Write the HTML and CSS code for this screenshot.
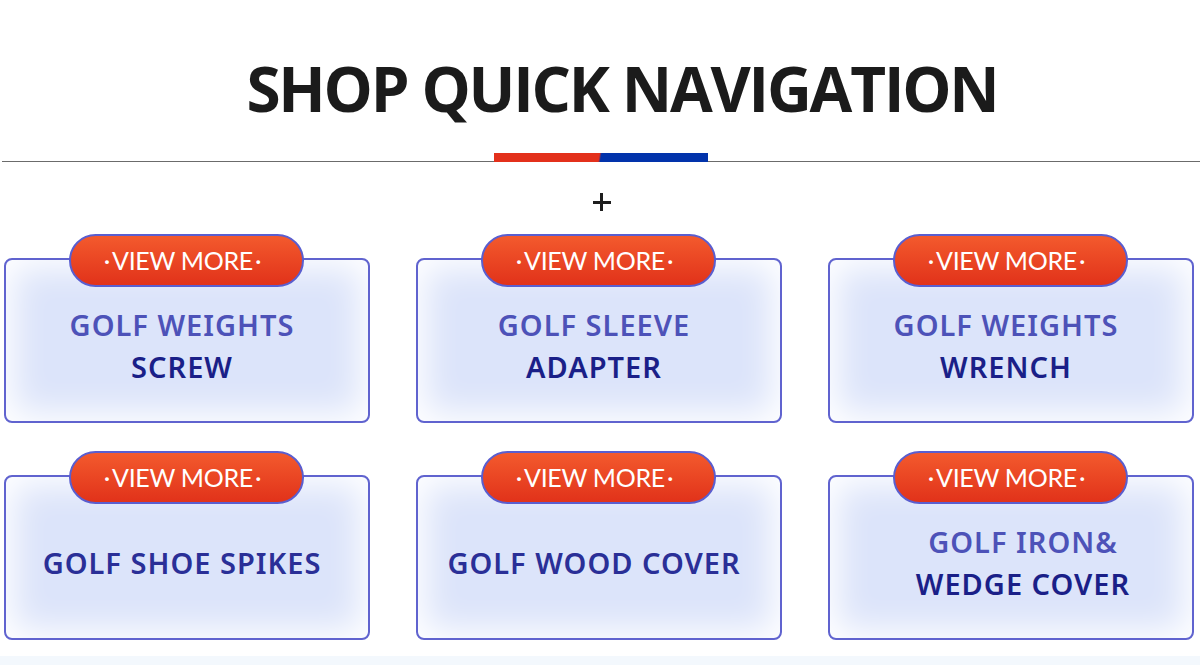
FILE: index.html
```html
<!DOCTYPE html>
<html lang="en">
<head>
    <meta charset="UTF-8">
    <meta name="viewport" content="width=device-width, initial-scale=1.0">
    <title>Shop Quick Navigation</title>
    <link rel="stylesheet" href="styles.css">
</head>
<body>
    <section class="quick-nav">
        <h1 class="quick-nav-title">SHOP QUICK NAVIGATION</h1>
        <div class="divider"><span class="divider-bar"></span></div>
        <div class="plus"><span class="plus-icon"></span></div>

        <div class="nav-grid">
            <a href="#" class="nav-item">
                <span class="view-more"><i>&middot;</i>VIEW MORE<i>&middot;</i></span>
                <div class="nav-card">
                    <span class="line-light">GOLF WEIGHTS</span>
                    <span class="line-dark">SCREW</span>
                </div>
            </a>
            <a href="#" class="nav-item">
                <span class="view-more"><i>&middot;</i>VIEW MORE<i>&middot;</i></span>
                <div class="nav-card">
                    <span class="line-light">GOLF SLEEVE</span>
                    <span class="line-dark">ADAPTER</span>
                </div>
            </a>
            <a href="#" class="nav-item">
                <span class="view-more"><i>&middot;</i>VIEW MORE<i>&middot;</i></span>
                <div class="nav-card">
                    <span class="line-light">GOLF WEIGHTS</span>
                    <span class="line-dark">WRENCH</span>
                </div>
            </a>
            <a href="#" class="nav-item">
                <span class="view-more"><i>&middot;</i>VIEW MORE<i>&middot;</i></span>
                <div class="nav-card">
                    <span class="line-single">GOLF SHOE SPIKES</span>
                </div>
            </a>
            <a href="#" class="nav-item">
                <span class="view-more"><i>&middot;</i>VIEW MORE<i>&middot;</i></span>
                <div class="nav-card">
                    <span class="line-single">GOLF WOOD COVER</span>
                </div>
            </a>
            <a href="#" class="nav-item">
                <span class="view-more"><i>&middot;</i>VIEW MORE<i>&middot;</i></span>
                <div class="nav-card shift-right">
                    <span class="line-light">GOLF IRON&amp;</span>
                    <span class="line-dark">WEDGE COVER</span>
                </div>
            </a>
        </div>
    </section>
    <div class="bottom-strip"></div>
</body>
</html>
```

FILE: styles.css
```css
body {
    margin: 0;
    background: #fff;
    font-family: 'Open Sans', 'Noto Sans', Arial, sans-serif;
    overflow: hidden;
}
.quick-nav {
    padding-top: 57px;
}
.quick-nav-title {
    margin: 0;
    padding-left: 44px;
    text-align: center;
    font-size: 62px;
    line-height: 62px;
    font-weight: 700;
    color: #1b1b1b;
    letter-spacing: -2.2px;
}
.divider {
    margin: 34px 0 0 2px;
    height: 9px;
    display: flex;
    justify-content: center;
    background: linear-gradient(to bottom, transparent 8px, #6b6b6b 8px);
}
.divider-bar {
    width: 214px;
    height: 9px;
    background: linear-gradient(100deg, #e3301b 49%, #0233ab 50%);
}
.plus {
    margin-top: 31px;
    height: 18px;
    display: flex;
    justify-content: center;
    padding-left: 3px;
}
.plus-icon {
    width: 18px;
    height: 18px;
    background:
        linear-gradient(#1e1e1e, #1e1e1e) center / 18px 3px no-repeat,
        linear-gradient(#1e1e1e, #1e1e1e) center / 3px 18px no-repeat;
}
.nav-grid {
    margin-top: 23px;
    padding: 0 6px 0 4px;
    display: grid;
    grid-template-columns: repeat(3, 366px);
    column-gap: 46px;
    row-gap: 28px;
}
.nav-item {
    position: relative;
    display: block;
    padding-top: 24px;
    text-decoration: none;
}
.view-more {
    position: absolute;
    top: 0;
    left: 65px;
    width: 235px;
    height: 53px;
    box-sizing: border-box;
    padding-right: 8px;
    border: 2px solid #5a5ecf;
    border-radius: 27px;
    background: linear-gradient(to bottom, #f35a2d, #e1321a);
    color: #fff;
    font-family: Lato, 'Noto Sans', sans-serif;
    font-size: 25px;
    line-height: 48px;
    text-align: center;
    letter-spacing: -0.3px;
    z-index: 1;
}
.view-more i {
    font-style: normal;
    margin: 0 2px;
}
.nav-card {
    height: 165px;
    box-sizing: border-box;
    padding: 10px 10px 0 0;
    border: 2px solid #6063cf;
    border-radius: 8px;
    background: #dce4fa;
    box-shadow: inset 0 0 34px 8px #fff;
    display: flex;
    flex-direction: column;
    align-items: center;
    justify-content: center;
    font-family: 'Noto Sans', 'Open Sans', sans-serif;
    font-size: 29px;
    line-height: 42px;
    font-weight: 600;
    letter-spacing: 1px;
}
.nav-card.shift-right {
    padding-left: 34px;
}
.line-light {
    color: #4d52b8;
}
.line-dark {
    color: #1a1f88;
}
.line-single {
    color: #2a2f97;
}
.bottom-strip {
    margin-top: 16px;
    height: 20px;
    background: #f3f8fd;
}
```
